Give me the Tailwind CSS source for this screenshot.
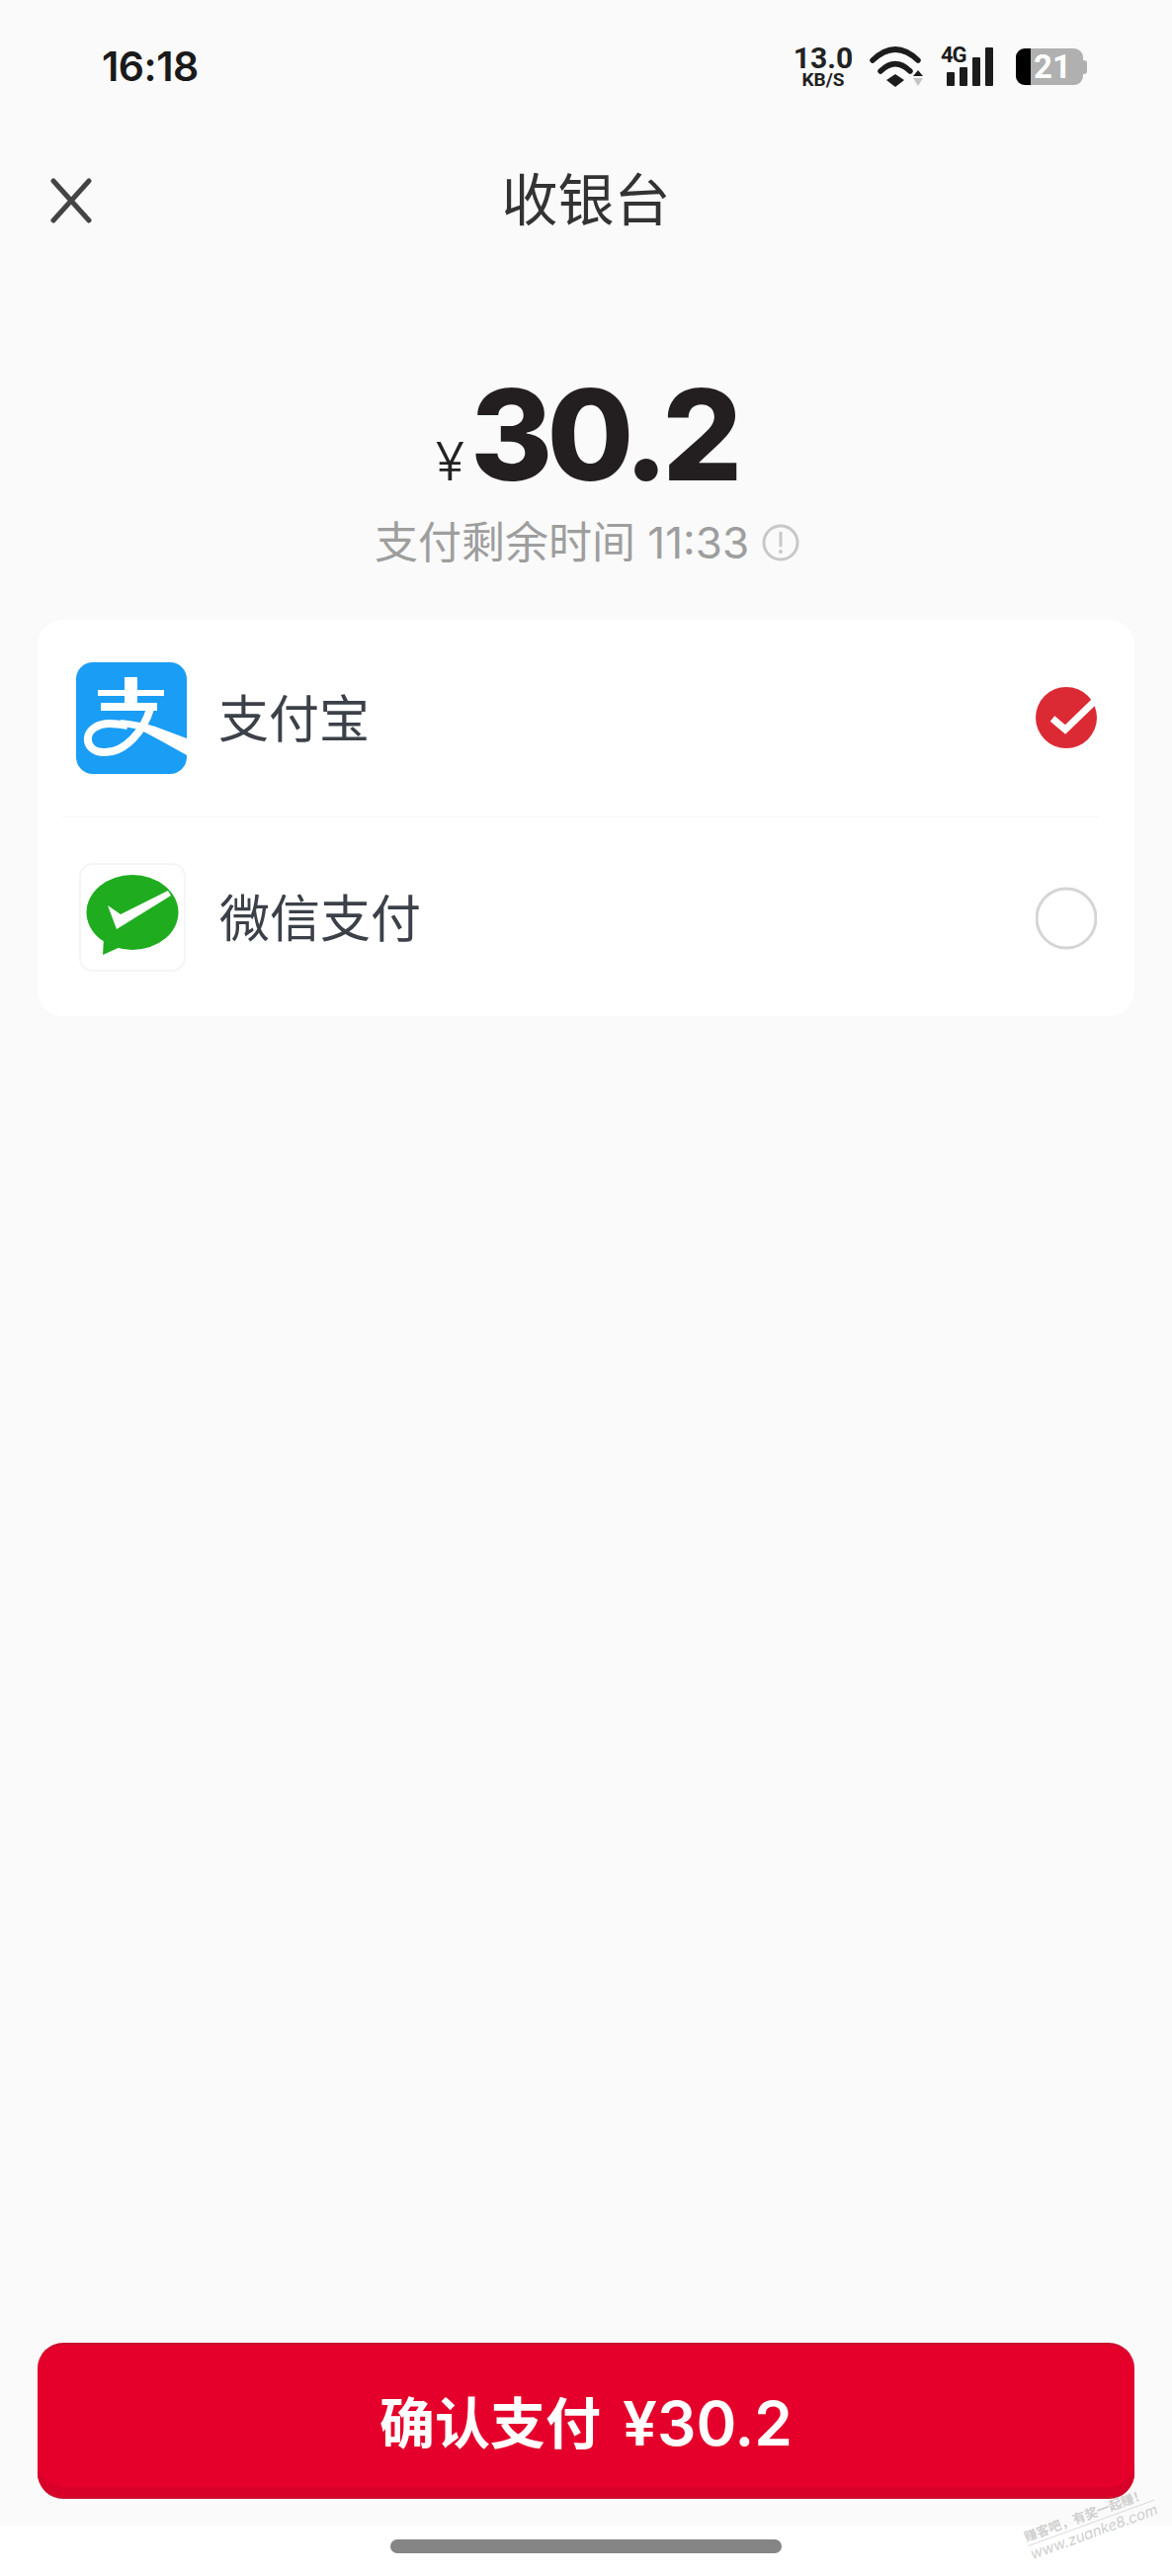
<!DOCTYPE html>
<html lang="zh-CN">
<head>
    <meta charset="UTF-8">
    <meta name="viewport" content="width=device-width, initial-scale=1.0">
    <title>收银台</title>
    <script src="https://cdn.jsdelivr.net/npm/@tailwindcss/browser@4"></script>
</head>
<body class="bg-white">
    <div class="relative w-[1186px] h-[2606px] flex flex-col bg-[#fafafa] overflow-hidden font-['Inter','Noto_Sans_CJK_SC',sans-serif]">
        <!-- status bar -->
        <div class="h-[132px] shrink-0 flex items-start justify-between pt-[47px] pl-[103px] pr-[86px]">
            <div class="text-[41px] leading-[40px] font-semibold text-[#1a1a1a] tracking-[-0.5px]">16:18</div>
            <div class="flex items-start">
                <div class="w-[60px] flex flex-col items-center text-[#222] font-bold font-['Roboto',sans-serif]">
                    <div class="text-[30px] leading-[24px]">13.0</div>
                    <div class="text-[19px] leading-[15px] mt-[2px]">KB/S</div>
                </div>
                <svg class="ml-[17px]" width="55" height="41" viewBox="0 0 55 41">
                    <path d="M3 14 Q26 -8 49 14" fill="none" stroke="#1c1c1c" stroke-width="5.5" stroke-linecap="round"/>
                    <path d="M11 25 Q26 10 41 25" fill="none" stroke="#1c1c1c" stroke-width="5.5" stroke-linecap="round"/>
                    <path d="M26 28 L35 34 L26 41 L17 34 Z" fill="#1c1c1c"/>
                    <path d="M49 24 L54 30 H44 Z" fill="#1c1c1c"/>
                    <path d="M44 32 H54 L49 40 Z" fill="#c4c4c4"/>
                </svg>
                <div class="relative w-[56px] h-[40px] ml-[17px] flex items-end gap-[5px] pl-[6px]">
                    <div class="absolute left-0 top-0 text-[22px] leading-[17px] font-bold text-[#1c1c1c] font-['Roboto',sans-serif] tracking-[-1px]">4G</div>
                    <div class="w-[8px] h-[14px] bg-[#1c1c1c] rounded-[1px]"></div>
                    <div class="w-[8px] h-[19px] bg-[#1c1c1c] rounded-[1px]"></div>
                    <div class="w-[8px] h-[29px] bg-[#1c1c1c] rounded-[1px]"></div>
                    <div class="w-[8px] h-[39px] bg-[#1c1c1c] rounded-[1px]"></div>
                </div>
                <div class="flex items-center ml-[20px] mt-[2px]">
                    <div class="w-[68px] h-[37px] rounded-[9px] overflow-hidden flex bg-[#b0b0b0]">
                        <div class="w-[15px] bg-black"></div>
                        <div class="text-[33px] leading-[37px] font-bold text-white pl-[3px] font-['Roboto',sans-serif]">21</div>
                    </div>
                    <div class="w-[4px] h-[14px] bg-[#b0b0b0] rounded-r-[3px]"></div>
                </div>
            </div>
        </div>

        <!-- nav -->
        <div class="h-[142px] shrink-0 grid grid-cols-[1fr_auto_1fr] items-center">
            <svg class="ml-[51px]" width="42" height="46" viewBox="0 0 42 46">
                <path d="M3 3 L39 43 M39 3 L3 43" stroke="#444" stroke-width="5" stroke-linecap="round" fill="none"/>
            </svg>
            <div class="text-[57px] leading-[70px] text-[#333]">收银台</div>
            <div></div>
        </div>

        <!-- amount -->
        <div class="flex justify-center items-baseline h-[114px] mt-[109px] shrink-0">
            <span class="text-[54px] leading-[114px] font-light text-[#222] mr-[6px]">¥</span>
            <span class="text-[127px] leading-[114px] font-extrabold text-[#231f20] tracking-[-6px]">30.2</span>
        </div>
        <div class="flex justify-center items-center h-[60px] mt-[22px] pl-[2px] shrink-0 text-[44px] leading-[60px] text-[#9e9e9e]">
            <span>支付剩余时间 11:33</span>
            <svg class="ml-[13px]" width="38" height="38" viewBox="0 0 38 38">
                <circle cx="19" cy="19" r="17" fill="none" stroke="#c8c8c8" stroke-width="3"/>
                <path d="M19 9 V22" stroke="#c8c8c8" stroke-width="3" stroke-linecap="round"/>
                <circle cx="19" cy="28" r="2" fill="#c8c8c8"/>
            </svg>
        </div>

        <!-- pay methods -->
        <div class="mx-[38px] mt-[48px] h-[401px] shrink-0 bg-white rounded-[26px] px-[25px] flex flex-col">
            <div class="h-[200px] flex items-center justify-between border-b-2 border-[#fafafa] mr-[11px]">
                <div class="flex items-center">
                    <svg class="ml-[14px]" width="112" height="113" viewBox="0 0 112 113">
                        <rect width="112" height="113" rx="17" fill="#1a9df5"/>
                        <path d="M49 15 H62 V28 H89 V34 H62 V41 H82 V49 H25 V41 H49 V34 H22 V28 H49 Z" fill="#fff"/>
                        <path d="M75 47 C69 68 50 92 28 91 C17 91 11 84 12 76 C13 68 22 62 34 62 C40 62 46 63 52 64" fill="none" stroke="#fff" stroke-width="8"/>
                        <path d="M112 77 L80 65 Q65 60 45 58 L45 65 Q60 66 70 71 L85 79 L112 94 Z" fill="#fff"/>
                    </svg>
                    <span class="ml-[32px] pt-[3px] text-[51px] leading-[60px] text-[#3c4048]">支付宝</span>
                </div>
            </div>
            <div class="flex-1 flex items-center mr-[11px]">
                <div class="ml-[17px] w-[108px] h-[110px] rounded-[14px] border-2 border-[#f5f5f5] bg-white">
                    <svg width="104" height="106" viewBox="2 2 104 106">
                        <ellipse cx="54" cy="50" rx="46.5" ry="38" fill="#1fad1f"/>
                        <path d="M25 76 L24 93 L44 84 Z" fill="#1fad1f"/>
                        <path d="M29 43 L42 52 L90 28 L93 33 L38 67 Z" fill="#fff"/>
                    </svg>
                </div>
                <span class="ml-[34px] pt-[5px] text-[51px] leading-[60px] text-[#3c4048]">微信支付</span>
            </div>
            <!-- radios sit over the row ends, past the divider -->
            <svg class="absolute left-[1048px] top-[695px]" width="62" height="62" viewBox="0 0 62 62">
                <circle cx="31" cy="31" r="31" fill="#dc2a35"/>
                <path d="M17 32 L30 43 L60 14" fill="none" stroke="#fff" stroke-width="7"/>
            </svg>
            <svg class="absolute left-[1048px] top-[897px]" width="62" height="64" viewBox="0 0 62 64">
                <circle cx="31" cy="32" r="30" fill="none" stroke="#d5d5d5" stroke-width="3"/>
            </svg>
        </div>

        <!-- confirm button -->
        <div class="mt-auto mx-[38px] h-[158px] pt-[6px] shrink-0 flex items-center justify-center rounded-[26px] bg-[#e4002b] border-y-2 border-[#c8102e] shadow-[inset_0_-10px_0_#d80028] text-white font-bold leading-[70px]">
            <span class="text-[56px]">确认支付</span>
            <span class="text-[62px] ml-[22px] font-semibold">¥30.2</span>
        </div>

        <!-- home indicator -->
        <div class="mt-[27px] h-[51px] shrink-0 bg-white flex justify-center pt-[14px]">
            <div class="w-[396px] h-[14px] bg-[#858585] rounded-full"></div>
        </div>

        <!-- watermark -->
        <div class="absolute left-[1036px] top-[2534px] -rotate-[20deg] text-[#cfcfcf] leading-[18px]">
            <div class="text-[13px] font-semibold border-b border-[#dcdcdc] whitespace-nowrap">赚客吧，有奖一起赚！</div>
            <div class="text-[15px] italic whitespace-nowrap">www.zuanke8.com</div>
        </div>
    </div>
</body>
</html>
